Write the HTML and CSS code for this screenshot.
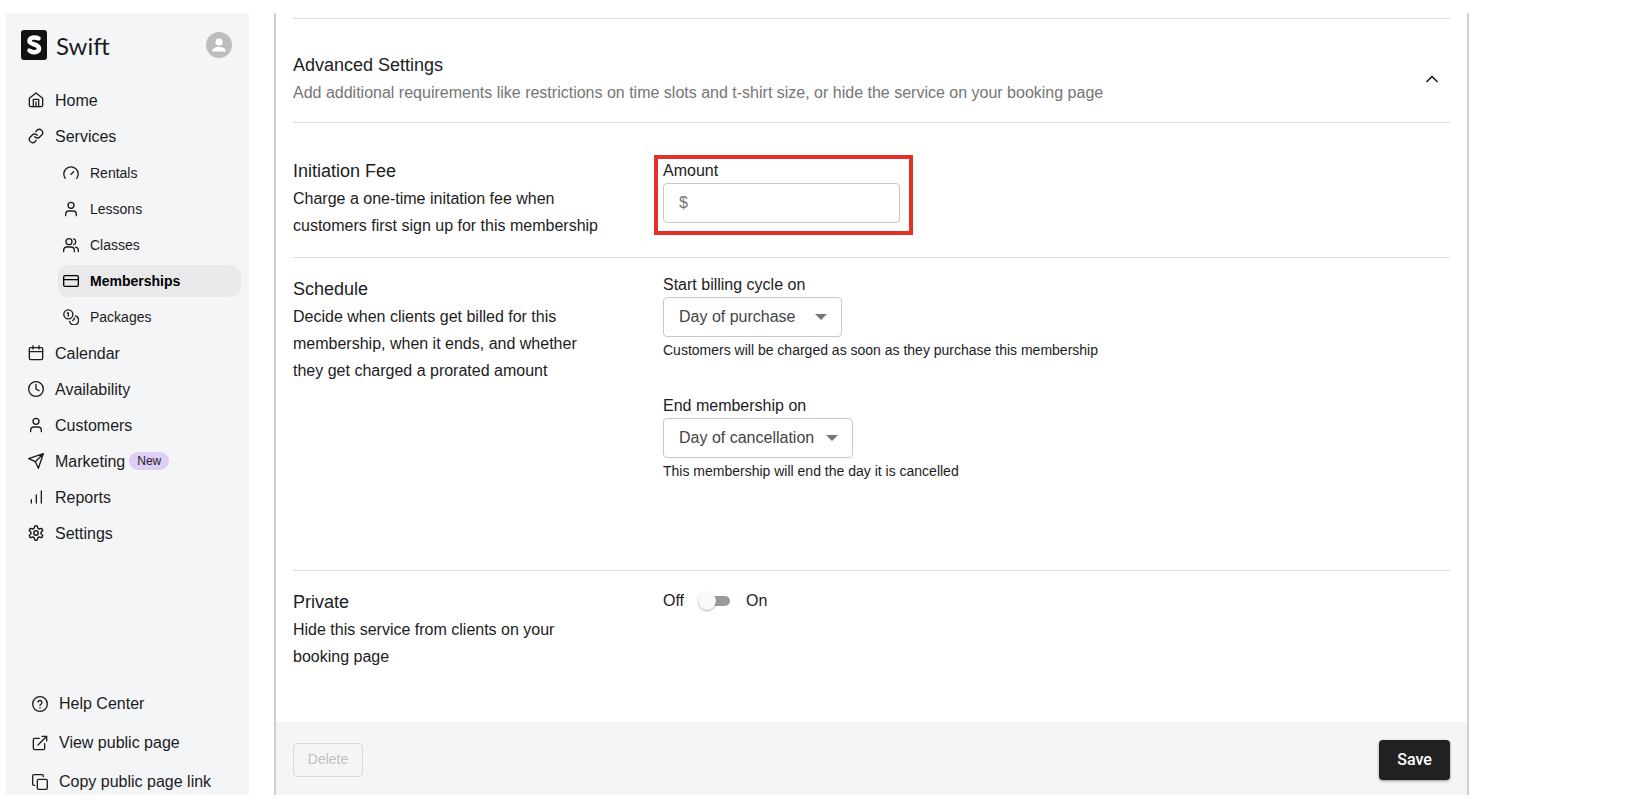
FILE: index.html
```html
<!DOCTYPE html>
<html lang="en">
<head>
  <meta charset="UTF-8">
  <title>Memberships - Swift</title>
  <meta name="viewport" content="width=device-width, initial-scale=1.0" />
  <link rel="stylesheet" href="styles.css">
</head>
<body>
  <div class="app">
    <!-- Sidebar -->
    <aside class="sidebar">
      <header class="brand">
        <svg class="brand-logo" viewBox="0 0 26 30" aria-hidden="true">
          <rect width="26" height="30" rx="3" fill="#111"/>
          <path d="M17.500 8.500C14 6.500 8.500 7.500 8.500 11C8.500 15 18 13.500 18 18.500C18 22.500 12 23.500 8.500 20.500" fill="none" stroke="#fff" stroke-width="4.500" stroke-linecap="round"/>
          <path d="M5 17l6 1.500M21 11.500l-7-.500" stroke="#111" stroke-width="1.200"/>
        </svg>
        <span class="brand-name">Swift</span>
        <button class="avatar" type="button" aria-label="Account">
          <svg viewBox="0 0 26 26">
            <circle cx="13" cy="13" r="13" fill="#bdbdbd"/>
            <circle cx="13" cy="10" r="3.600" fill="#fff"/>
            <path d="M6.500 19.500v-1.200c0-2.300 4.300-3.500 6.500-3.500s6.500 1.200 6.500 3.500v1.200z" fill="#fff"/>
          </svg>
        </button>
      </header>

      <nav class="nav" aria-label="Main">
        <a class="nav-link" href="#home">
          <svg class="icon" viewBox="0 0 24 24"><path d="M2 9.500l10-8 10 8V20a2 2 0 0 1-2 2H4a2 2 0 0 1-2-2z"/><path d="M8 22V11h8v11M12 22v-7"/></svg>
          Home
        </a>
        <a class="nav-link" href="#services">
          <svg class="icon" viewBox="0 0 24 24"><path d="M10 13a5 5 0 0 0 7.540.540l3-3a5 5 0 0 0-7.070-7.070l-1.720 1.710"/><path d="M14 11a5 5 0 0 0-7.540-.540l-3 3a5 5 0 0 0 7.070 7.070l1.710-1.710"/></svg>
          Services
        </a>
        <div class="subnav">
          <a class="nav-link nav-link--sub" href="#rentals">
            <svg class="icon" viewBox="0 0 24 24"><path d="M12 14l4-4"/><path d="M3.340 20a10.800 10.800 0 1 1 17.320 0"/></svg>
            Rentals
          </a>
          <a class="nav-link nav-link--sub" href="#lessons">
            <svg class="icon" viewBox="0 0 24 24"><circle cx="12" cy="6.500" r="4.500"/><path d="M4 22v-2a5 5 0 0 1 5-5h6a5 5 0 0 1 5 5v2"/></svg>
            Lessons
          </a>
          <a class="nav-link nav-link--sub" href="#classes">
            <svg class="icon" viewBox="0 0 24 24"><circle cx="9" cy="7" r="4.500"/><path d="M1 22v-2a5 5 0 0 1 5-5h6a5 5 0 0 1 5 5v2M16 2.700a4.500 4.500 0 0 1 0 8.600M23 22v-2a5 5 0 0 0-4-4.900"/></svg>
            Classes
          </a>
          <a class="nav-link nav-link--sub active" href="#memberships" aria-current="page">
            <svg class="icon" viewBox="0 0 24 24"><rect x="1" y="4" width="22" height="16" rx="2"/><path d="M1 10h22"/></svg>
            Memberships
          </a>
          <a class="nav-link nav-link--sub" href="#packages">
            <svg class="icon" viewBox="0 0 24 24"><circle cx="8" cy="8" r="6.800"/><path d="M18.500 10.400A6.800 6.800 0 1 1 10 18.500M6.500 6H8v4.500M16.700 13.900l.7.700-2.800 2.800"/></svg>
            Packages
          </a>
        </div>
        <a class="nav-link" href="#calendar">
          <svg class="icon" viewBox="0 0 24 24"><rect x="2" y="4" width="20" height="18" rx="2"/><path d="M7.500 1v5M16.500 1v5M2 10h20"/></svg>
          Calendar
        </a>
        <a class="nav-link" href="#availability">
          <svg class="icon" viewBox="0 0 24 24"><circle cx="12" cy="12" r="11"/><path d="M12 5v7l4.500 2.500"/></svg>
          Availability
        </a>
        <a class="nav-link" href="#customers">
          <svg class="icon" viewBox="0 0 24 24"><circle cx="12" cy="6.500" r="4.500"/><path d="M4 22v-2a5 5 0 0 1 5-5h6a5 5 0 0 1 5 5v2"/></svg>
          Customers
        </a>
        <a class="nav-link" href="#marketing">
          <svg class="icon" viewBox="0 0 24 24"><path d="M23 1L11 13M23 1l-7.500 22L11 13 1 8.500z"/></svg>
          Marketing
          <span class="badge">New</span>
        </a>
        <a class="nav-link" href="#reports">
          <svg class="icon" viewBox="0 0 24 24"><path d="M20 21V3M12.500 21V9M5 21v-5"/></svg>
          Reports
        </a>
        <a class="nav-link" href="#settings">
          <svg class="icon" viewBox="1 1 22 22"><path d="M12.220 2h-.440a2 2 0 0 0-2 2v.180a2 2 0 0 1-1 1.730l-.430.250a2 2 0 0 1-2 0l-.150-.080a2 2 0 0 0-2.730.730l-.220.380a2 2 0 0 0 .730 2.730l.150.100a2 2 0 0 1 1 1.720v.510a2 2 0 0 1-1 1.740l-.150.090a2 2 0 0 0-.730 2.730l.220.380a2 2 0 0 0 2.730.730l.150-.080a2 2 0 0 1 2 0l.430.250a2 2 0 0 1 1 1.730V20a2 2 0 0 0 2 2h.440a2 2 0 0 0 2-2v-.180a2 2 0 0 1 1-1.730l.430-.250a2 2 0 0 1 2 0l.150.080a2 2 0 0 0 2.730-.730l.220-.390a2 2 0 0 0-.730-2.730l-.150-.080a2 2 0 0 1-1-1.740v-.500a2 2 0 0 1 1-1.740l.150-.090a2 2 0 0 0 .730-2.730l-.220-.380a2 2 0 0 0-2.730-.730l-.150.080a2 2 0 0 1-2 0l-.430-.250a2 2 0 0 1-1-1.730V4a2 2 0 0 0-2-2z"/><circle cx="12" cy="12" r="3"/></svg>
          Settings
        </a>
      </nav>

      <nav class="nav-footer" aria-label="Help and sharing">
        <a class="footer-link" href="#help">
          <svg class="icon" viewBox="0 0 24 24"><circle cx="12" cy="12" r="11"/><path d="M9 9a3 3 0 0 1 5.900 1c0 2-2.900 2.500-2.900 4M12 17.500v.500"/></svg>
          Help Center
        </a>
        <a class="footer-link" href="#public">
          <svg class="icon" viewBox="0 0 24 24"><path d="M19 13v7a2 2 0 0 1-2 2H4a2 2 0 0 1-2-2V7a2 2 0 0 1 2-2h7M15 2h7v7M9 15L22 2"/></svg>
          View public page
        </a>
        <button class="footer-link" type="button">
          <svg class="icon" viewBox="0 0 24 24"><rect x="8" y="8" width="15" height="15" rx="2"/><path d="M4 17H3a2 2 0 0 1-2-2V3a2 2 0 0 1 2-2h12a2 2 0 0 1 2 2v1"/></svg>
          Copy public page link
        </button>
      </nav>
    </aside>

    <!-- Membership form -->
    <main class="content">
      <form class="card">
        <div class="card-body">
          <header class="section-header">
            <div>
              <h2>Advanced Settings</h2>
              <p class="muted">Add additional requirements like restrictions on time slots and t-shirt size, or hide the service on your booking page</p>
            </div>
            <button class="collapse" type="button" aria-label="Collapse advanced settings" aria-expanded="true">
              <svg class="icon" viewBox="0 0 24 24"><path d="M6 15l6-6 6 6"/></svg>
            </button>
          </header>

          <section class="setting setting--fee">
            <div class="setting-info">
              <h2>Initiation Fee</h2>
              <p>Charge a one-time initation fee when customers first sign up for this membership</p>
            </div>
            <div class="setting-controls">
              <div class="field field--highlight">
                <label for="amount">Amount</label>
                <input class="text-input" id="amount" type="text" inputmode="decimal" placeholder="$">
              </div>
            </div>
          </section>

          <section class="setting setting--schedule">
            <div class="setting-info">
              <h2>Schedule</h2>
              <p>Decide when clients get billed for this membership, when it ends, and whether they get charged a prorated amount</p>
            </div>
            <div class="setting-controls">
              <div class="field">
                <label for="billing">Start billing cycle on</label>
                <div class="select">
                  <select id="billing" aria-describedby="billing-hint">
                    <option>Day of purchase</option>
                  </select>
                  <svg class="select-arrow" viewBox="0 0 12 6" aria-hidden="true"><path d="M0 0h12L6 6z"/></svg>
                </div>
                <p class="hint" id="billing-hint">Customers will be charged as soon as they purchase this membership</p>
              </div>
              <div class="field">
                <label for="ending">End membership on</label>
                <div class="select select--wide">
                  <select id="ending" aria-describedby="ending-hint">
                    <option>Day of cancellation</option>
                  </select>
                  <svg class="select-arrow" viewBox="0 0 12 6" aria-hidden="true"><path d="M0 0h12L6 6z"/></svg>
                </div>
                <p class="hint" id="ending-hint">This membership will end the day it is cancelled</p>
              </div>
            </div>
          </section>

          <section class="setting setting--private">
            <div class="setting-info">
              <h2 id="private-title">Private</h2>
              <p>Hide this service from clients on your booking page</p>
            </div>
            <div class="setting-controls">
              <label class="switch-row">
                <span>Off</span>
                <input class="switch" type="checkbox" role="switch" aria-labelledby="private-title">
                <span>On</span>
              </label>
            </div>
          </section>
        </div>

        <footer class="card-footer">
          <button class="btn btn-delete" type="button" disabled>Delete</button>
          <button class="btn btn-save" type="submit">Save</button>
        </footer>
      </form>
    </main>
  </div>
</body>
</html>
```
FILE: styles.css
```css
/* Reset */
* { margin: 0; padding: 0; box-sizing: border-box; }

:root {
  --text-color: #1c1c1e;
  --muted-color: #757575;
  --sidebar-bg: #f3f5f7;
  --active-bg: #e9e9eb;
  --line-color: #e0e0e0;
  --border-color: #c9c9c9;
  --highlight-color: #e33127;
}

body {
  font-family: "Liberation Sans", Arial, sans-serif;
  font-size: 16px;
  line-height: 27px;
  color: var(--text-color);
  background: #fff;
}

a { color: inherit; text-decoration: none; }

button, input, select {
  font: inherit;
  color: inherit;
}

h2 {
  font-size: 18px;
  font-weight: normal;
}

.icon {
  width: 16px;
  height: 16px;
  flex: none;
  fill: none;
  stroke: currentColor;
  stroke-width: 2;
  stroke-linecap: round;
  stroke-linejoin: round;
}

.app {
  display: flex;
  min-height: 100vh;
  padding: 13px 0 11px 6px;
}

/* Sidebar */
.sidebar {
  display: flex;
  flex-direction: column;
  flex: none;
  width: 243px;
  background: var(--sidebar-bg);
}

.brand {
  display: flex;
  align-items: center;
  padding: 17px 17px 0 15px;
}

.brand-logo {
  width: 26px;
  height: 30px;
}

.brand-name {
  margin-left: 9px;
  font-family: Lato, sans-serif;
  font-size: 24px;
}

.avatar {
  width: 26px;
  height: 26px;
  margin-left: auto;
  border: none;
  border-radius: 50%;
  background: none;
  cursor: pointer;
}

.avatar svg { display: block; }

.nav {
  display: flex;
  flex-direction: column;
  margin-top: 22px;
}

.nav-link {
  display: flex;
  align-items: center;
  gap: 11px;
  height: 36px;
  padding-left: 22px;
}

.subnav {
  display: flex;
  flex-direction: column;
  gap: 4px;
  padding: 3px 8px 2px 52px;
}

.nav-link--sub {
  height: 32px;
  padding-left: 5px;
  border-radius: 10px;
  font-size: 14px;
}

.nav-link.active {
  background: var(--active-bg);
  font-weight: bold;
  color: #000;
}

.badge {
  margin-left: -7px;
  padding: 0 8px;
  border-radius: 9px;
  background: #decdf7;
  font-size: 12px;
  line-height: 18px;
}

.nav-footer {
  display: flex;
  flex-direction: column;
  gap: 12px;
  margin-top: auto;
}

.footer-link {
  display: flex;
  align-items: center;
  gap: 11px;
  padding-left: 26px;
  border: none;
  background: none;
  cursor: pointer;
}

/* Card */
.content {
  display: flex;
  flex: 1;
  min-width: 0;
  padding-left: 25px;
}

.card {
  display: flex;
  flex-direction: column;
  flex: 1;
  max-width: 1195px;
  border: solid #d0d0d0;
  border-width: 0 2px;
}

.card-body {
  flex: 1;
  padding: 5px 17px 0;
}

.section-header {
  display: flex;
  align-items: center;
  justify-content: space-between;
  padding: 33px 0 16px;
  border-top: 1px solid var(--line-color);
}

.muted { color: var(--muted-color); }

.collapse {
  display: flex;
  margin-right: 8px;
  border: none;
  background: none;
  cursor: pointer;
}

.collapse .icon {
  width: 20px;
  height: 20px;
  stroke-width: 2;
}

.setting {
  display: grid;
  grid-template-columns: 310px 1fr;
  column-gap: 60px;
  border-top: 1px solid var(--line-color);
}

.setting--fee { padding: 35px 0 18px; }
.setting--schedule { padding: 15px 0 86px; }
.setting--schedule .setting-info { padding-top: 3px; }
.setting--private { padding: 18px 0; }

.setting-controls {
  display: flex;
  flex-direction: column;
  align-items: flex-start;
  gap: 31px;
  line-height: 24px;
}

.setting--fee .setting-controls { padding-top: 1px; }

/* Fields */
.field {
  display: flex;
  flex-direction: column;
  align-items: flex-start;
}

.field--highlight { position: relative; }

.field--highlight::after {
  content: "";
  position: absolute;
  inset: -4px -13px -12px -9px;
  border: 4px solid var(--highlight-color);
  pointer-events: none;
}

.text-input,
.select select {
  height: 40px;
  padding-left: 15px;
  border: 1px solid var(--border-color);
  border-radius: 4px;
  background: #fff;
}

.text-input { width: 237px; }
.text-input::placeholder { color: var(--muted-color); }

.select {
  position: relative;
  width: 179px;
}

.select--wide { width: 190px; }

.select select {
  appearance: none;
  width: 100%;
  color: #444;
}

.select-arrow {
  position: absolute;
  top: 17px;
  right: 15px;
  width: 12px;
  height: 6px;
  fill: #757575;
  pointer-events: none;
}

.hint {
  font-size: 14px;
  line-height: 26px;
}

/* Switch */
.switch-row {
  display: flex;
  align-items: center;
  cursor: pointer;
}

.switch {
  appearance: none;
  display: flex;
  align-items: center;
  width: 32px;
  height: 10px;
  margin: 0 16px 0 14px;
  border-radius: 5px;
  background: #9a9a9a;
}

.switch::before {
  content: "";
  width: 18px;
  height: 18px;
  border-radius: 50%;
  background: #fafafe;
  box-shadow: 0 1px 2px rgba(0, 0, 0, 0.3);
}

.switch:checked { justify-content: flex-end; }

/* Footer */
.card-footer {
  display: flex;
  align-items: center;
  justify-content: space-between;
  height: 73px;
  padding: 2px 17px 0;
  background: #f5f5f7;
}

.btn {
  border-radius: 4px;
  cursor: pointer;
}

.btn-delete {
  width: 70px;
  height: 34px;
  border: 1px solid #d8d8da;
  background: none;
  font-size: 14px;
  color: #c0c0c2;
  cursor: default;
}

.btn-save {
  width: 71px;
  height: 40px;
  border: none;
  background: #212121;
  box-shadow: 0 1px 3px rgba(0, 0, 0, 0.4);
  font-family: Roboto, sans-serif;
  font-weight: 500;
  color: #fff;
}
```
